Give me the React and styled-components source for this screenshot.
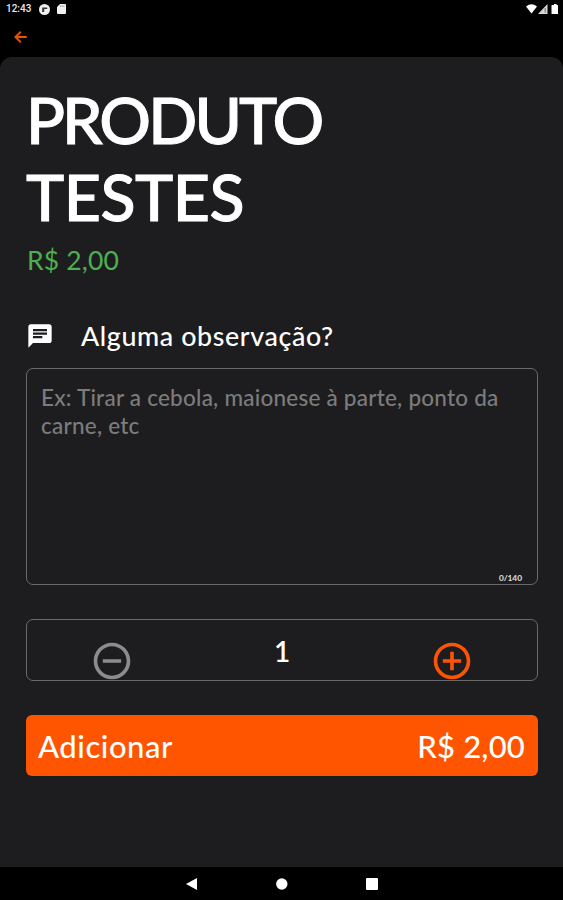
import React, { useState } from 'react';
import styled, { createGlobalStyle } from 'styled-components';
import { MdChat, MdAddCircleOutline, MdRemoveCircleOutline } from 'react-icons/md';

const GlobalStyle = createGlobalStyle`
    * {
        box-sizing: border-box;
    }

    body {
        margin: 0;
        background: #000000;
    }
`

const Base = styled.div`
    width: 563px;
    height: 900px;

    display: flex;
    flex-direction: column;
    overflow: hidden;

    font-family: 'Lato', sans-serif;
    color: #ffffff;
    background: #000000;
`

const StatusBar = styled.div`
    height: 18px;
    padding: 0 4px 0 6px;

    display: flex;
    align-items: center;
    justify-content: space-between;
`

const StatusGroup = styled.div`
    display: flex;
    align-items: center;
    gap: ${props => props.$gap}px;
`

const Clock = styled.span`
    width: 26px;

    font-family: 'Roboto', sans-serif;
    font-weight: 500;
    font-size: 10px;
    line-height: 18px;
    color: #e8e8e8;
`

const Header = styled.div`
    height: 39px;
    padding: 0 0 1px 14px;

    display: flex;
    align-items: center;
`

const IconButton = styled.button`
    margin: ${props => props.$margin || '0'};
    padding: 0;
    border: none;

    display: flex;
    background: none;
    color: ${props => props.$color};
    font-size: ${props => props.$size}px;
`

const Panel = styled.div`
    height: 810px;
    padding: 24px 25px 0 26px;

    border-radius: 12px 12px 0 0;
    background: #1d1d1f;
`

const Title = styled.h1`
    width: 400px;
    margin: 0;

    font-weight: 500;
    font-size: 64.5px;
    line-height: 76.5px;
    -webkit-text-stroke: 1px #ffffff;
`

const TitleLine = styled.span`
    display: block;
    letter-spacing: ${props => props.$spacing}px;
`

const Price = styled.div`
    margin: 10px 0 0 1px;

    font-size: 26.5px;
    line-height: 32px;
    letter-spacing: 0.15px;
    color: #4caf50;
`

const Question = styled.label`
    height: 32px;
    margin: 44px 0 0;

    display: flex;
    align-items: center;
    gap: 27px;

    font-weight: 500;
    font-size: 26.8px;
    line-height: 32px;
    letter-spacing: 0.62px;

    svg {
        font-size: 28px;
    }
`

const NoteBox = styled.div`
    height: 217px;
    margin: 16px 0 0;
    padding: 15px 14px 0 14px;

    display: flex;
    flex-direction: column;

    border: 1px solid #6a6a6c;
    border-radius: 7px;
`

const NoteInput = styled.textarea`
    width: 100%;
    flex: 1;
    padding: 0;

    border: none;
    outline: none;
    resize: none;
    background: none;

    font-family: inherit;
    font-weight: 500;
    font-size: 22.5px;
    line-height: 27.5px;
    letter-spacing: 0.23px;
    color: #ffffff;

    &::placeholder {
        color: #7c7c7d;
        opacity: 1;
    }
`

const Count = styled.div`
    padding-right: 1px;

    text-align: right;
    font-weight: 700;
    font-size: 8.3px;
    line-height: 11px;
    color: #e0e0e0;
`

const Quantity = styled.div`
    height: 62px;
    margin: 34px 0 0;
    padding: 0 63px 0 63px;

    display: flex;
    justify-content: space-between;

    border: 1px solid #6a6a6c;
    border-radius: 7px;
`

const Amount = styled.span`
    font-weight: 600;
    font-size: 28px;
    line-height: 62px;
`

const AddButton = styled.button`
    width: 100%;
    height: 61px;
    margin: 34px 0 0;
    padding: 0 13px 0 12px;

    display: flex;
    align-items: center;
    justify-content: space-between;

    border: none;
    border-radius: 6px;
    background: #ff5500;

    font-family: inherit;
    font-weight: 500;
    font-size: 31px;
    line-height: 40px;
    color: #ffffff;
`

const ButtonText = styled.span`
    letter-spacing: ${props => props.$spacing}px;
`

const NavBar = styled.div`
    height: 33px;

    display: flex;
    align-items: center;
    justify-content: center;
    gap: 78px;

    svg {
        display: block;
    }
`

const MAX_NOTE = 140;
const UNIT_PRICE = 2;

const money = value => `R$ ${value.toFixed(2).replace('.', ',')}`;

export default function App() {
  const [note, setNote] = useState('');
  const [amount, setAmount] = useState(1);

  return (
    <Base>
        <GlobalStyle />
        <StatusBar>
            <StatusGroup $gap={7}>
                <Clock>12:43</Clock>
                <svg width="11" height="11" viewBox="0 0 11 11">
                    <circle cx="5.5" cy="5.5" r="5.5" fill="#f0f0f0" />
                    <path d="M3.2 8V3.6H8.2V5H5.2V8Z" fill="#333333" />
                </svg>
                <svg width="9" height="10" viewBox="0 0 9 10">
                    <path d="M3 0H8Q9 0 9 1V9Q9 10 8 10H1Q0 10 0 9V3Z" fill="#f0f0f0" />
                    <path d="M3.5 1.5V3M5.2 1.5V3M6.9 1.5V3" stroke="#777777" strokeWidth="0.7" />
                </svg>
            </StatusGroup>
            <StatusGroup $gap={1}>
                <svg width="11" height="10" viewBox="0 0 11 10">
                    <path d="M0 2.6Q5.5 -2 11 2.6L5.5 9.5Z" fill="#ffffff" />
                </svg>
                <svg width="10" height="10" viewBox="0 0 10 10">
                    <path d="M0 10L9.5 0V10Z" fill="#d8d8d8" />
                    <path d="M7.2 4V8.5" stroke="#666666" strokeWidth="1" />
                </svg>
                <svg width="10" height="10" viewBox="0 0 10 10">
                    <path d="M4 1H5V0H7.5V1H8.5Q9 1 9 1.6V9.4Q9 10 8.5 10H3Q2.5 10 2.5 9.4V1.6Q2.5 1 3 1Z" fill="#ffffff" />
                </svg>
            </StatusGroup>
        </StatusBar>
        <Header>
            <IconButton $color="#ea5204" aria-label="Voltar">
                <svg width="13" height="12" viewBox="0 0 13 12">
                    <path d="M12.8 6H1.6M6.8 0.8L1.4 6L6.8 11.2" fill="none" stroke="currentColor" strokeWidth="1.9" />
                </svg>
            </IconButton>
        </Header>
        <Panel>
            <Title>
                <TitleLine $spacing={-2.9}>PRODUTO</TitleLine>
                <TitleLine $spacing={-0.5}>TESTES</TitleLine>
            </Title>
            <Price>{money(UNIT_PRICE)}</Price>
            <Question htmlFor="note">
                <MdChat />
                <span>Alguma observação?</span>
            </Question>
            <NoteBox>
                <NoteInput
                    id="note"
                    value={note}
                    maxLength={MAX_NOTE}
                    placeholder="Ex: Tirar a cebola, maionese à parte, ponto da carne, etc"
                    onChange={e => setNote(e.target.value)}
                />
                <Count>{note.length}/{MAX_NOTE}</Count>
            </NoteBox>
            <Quantity>
                <IconButton
                    $color="#8c8c8d"
                    $size={44}
                    $margin="19px 0 0"
                    aria-label="Remover"
                    onClick={() => setAmount(Math.max(1, amount - 1))}
                >
                    <MdRemoveCircleOutline />
                </IconButton>
                <Amount>{amount}</Amount>
                <IconButton
                    $color="#fa5505"
                    $size={44}
                    $margin="19px 0 0"
                    aria-label="Somar"
                    onClick={() => setAmount(amount + 1)}
                >
                    <MdAddCircleOutline />
                </IconButton>
            </Quantity>
            <AddButton>
                <ButtonText $spacing={0.55}>Adicionar</ButtonText>
                <ButtonText $spacing={0.2}>{money(UNIT_PRICE * amount)}</ButtonText>
            </AddButton>
        </Panel>
        <NavBar>
            <svg width="12" height="12" viewBox="0 0 12 12">
                <path d="M0 6L11 0V12Z" fill="#ffffff" />
            </svg>
            <svg width="12" height="12" viewBox="0 0 12 12">
                <circle cx="5.8" cy="6" r="5.7" fill="#ffffff" />
            </svg>
            <svg width="12" height="12" viewBox="0 0 12 12">
                <rect width="12" height="12" rx="1" fill="#ffffff" />
            </svg>
        </NavBar>
    </Base>
  )
}
